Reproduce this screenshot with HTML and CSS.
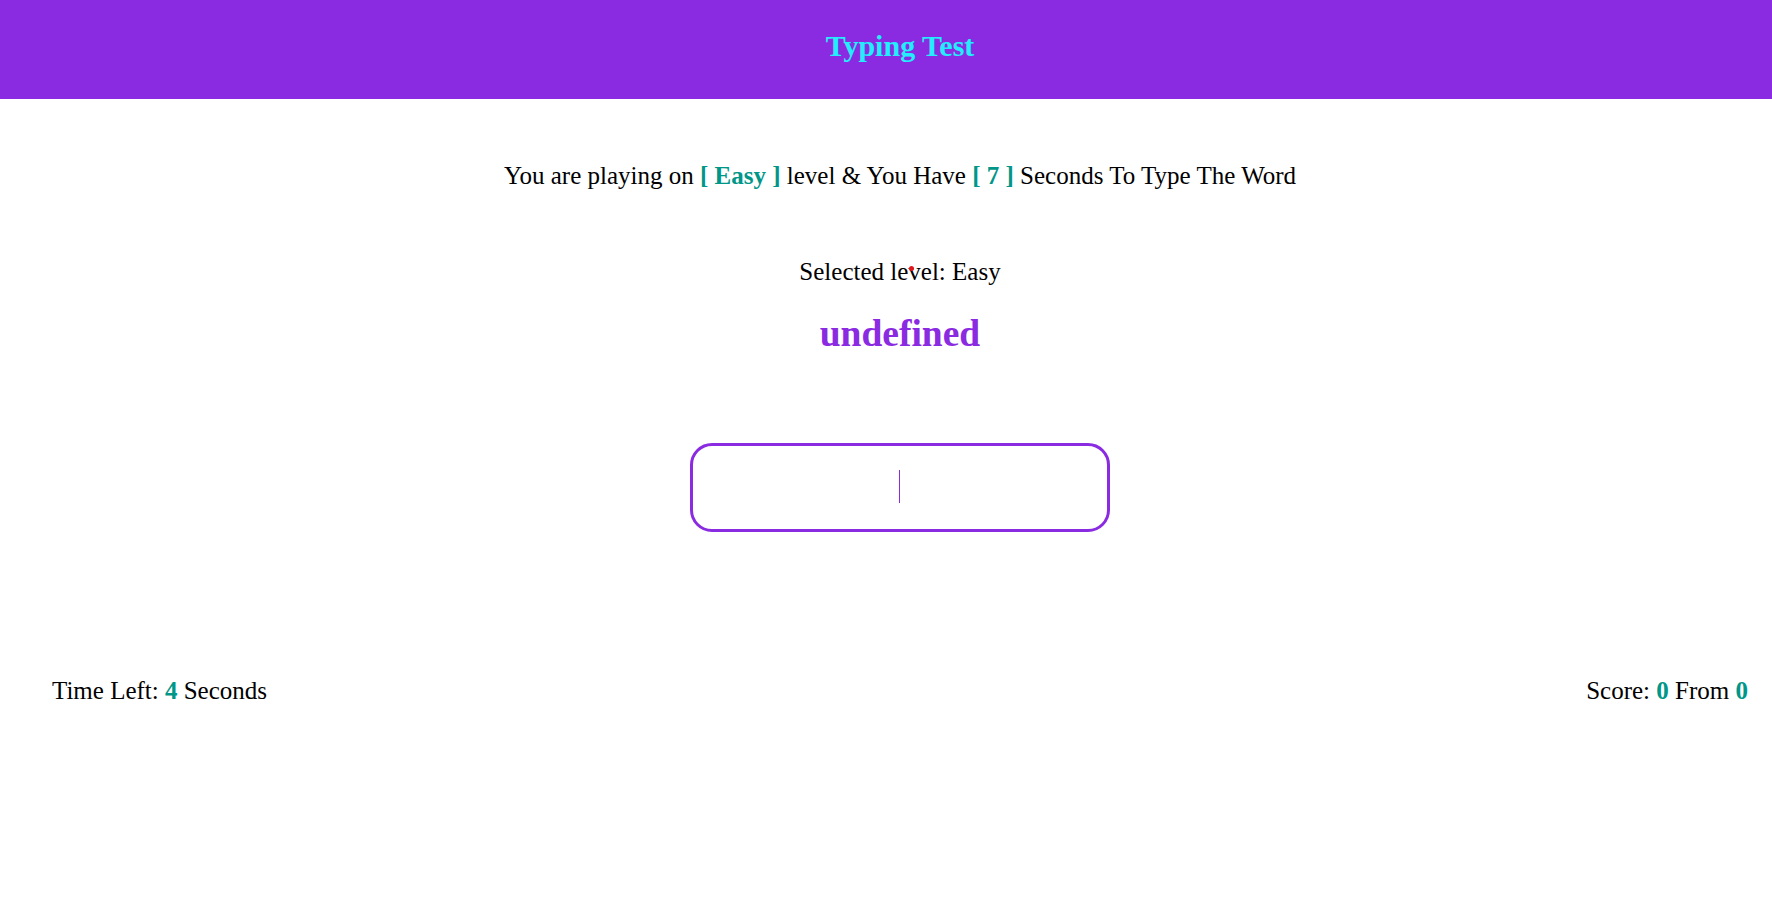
FILE: index.html
```html
<!DOCTYPE html>
<html lang="en">
<head>
<meta charset="utf-8">
<title>Typing Test</title>
<link rel="stylesheet" href="styles.css">
</head>
<body>
<header class="top-bar">
  <h1 class="title">Typing Test</h1>
</header>
<main class="game">
  <p class="message">You are playing on <span class="accent">[ Easy ]</span> level &amp; You Have <span class="accent">[ 7 ]</span> Seconds To Type The Word</p>
  <p class="selected">Selected level: Easy</p>
  <div class="word">undefined</div>
  <div class="input-wrap">
    <input class="input" type="text" autofocus>
    <span class="caret"></span>
  </div>
  <div class="control">
    <div class="time">Time Left: <span class="accent">4</span> Seconds</div>
    <div class="score">Score: <span class="accent">0</span> From <span class="accent">0</span></div>
  </div>
</main>
<span class="pointer-dot"></span>
</body>
</html>
```
FILE: styles.css
```css
html, body {
  margin: 0;
  padding: 0;
  background: #ffffff;
}
body {
  font-family: "Liberation Serif", "Times New Roman", serif;
  color: #000000;
}
.top-bar {
  background: #8a2be2;
  height: 99px;
  display: flex;
  align-items: center;
  justify-content: center;
  padding-left: 28px;
}
.title {
  margin: 0;
  font-size: 30px;
  font-weight: bold;
  color: #22eeff;
  line-height: 1;
  position: relative;
  top: -4px;
}
.game {
  padding: 0 24px 0 52px;
  display: flex;
  flex-direction: column;
  align-items: center;
}
.message {
  margin: 63px 0 0;
  font-size: 25px;
  line-height: 28px;
  text-align: center;
}
.accent {
  color: #009688;
  font-weight: bold;
}
.selected {
  margin: 68px 0 0;
  font-size: 25px;
  line-height: 28px;
}
.word {
  margin-top: 26px;
  font-size: 37.5px;
  line-height: 44px;
  font-weight: bold;
  color: #8a2be2;
}
.input-wrap {
  margin-top: 87px;
  position: relative;
  width: 420px;
  height: 89px;
}
.input {
  box-sizing: border-box;
  width: 420px;
  height: 89px;
  border: 3px solid #8a2be2;
  border-radius: 22px;
  outline: none;
  text-align: center;
  font-size: 30px;
  font-family: "Liberation Serif", serif;
  caret-color: transparent;
  background: #fff;
}
.caret {
  position: absolute;
  left: 209px;
  top: 27px;
  width: 1px;
  height: 33px;
  background: #8a2be2;
}
.control {
  align-self: stretch;
  margin-top: 145px;
  display: flex;
  justify-content: space-between;
  font-size: 25px;
  line-height: 28px;
}
.pointer-dot {
  position: absolute;
  left: 909px;
  top: 266px;
  width: 5px;
  height: 5px;
  border-radius: 50%;
  background: #e0161e;
}
```
